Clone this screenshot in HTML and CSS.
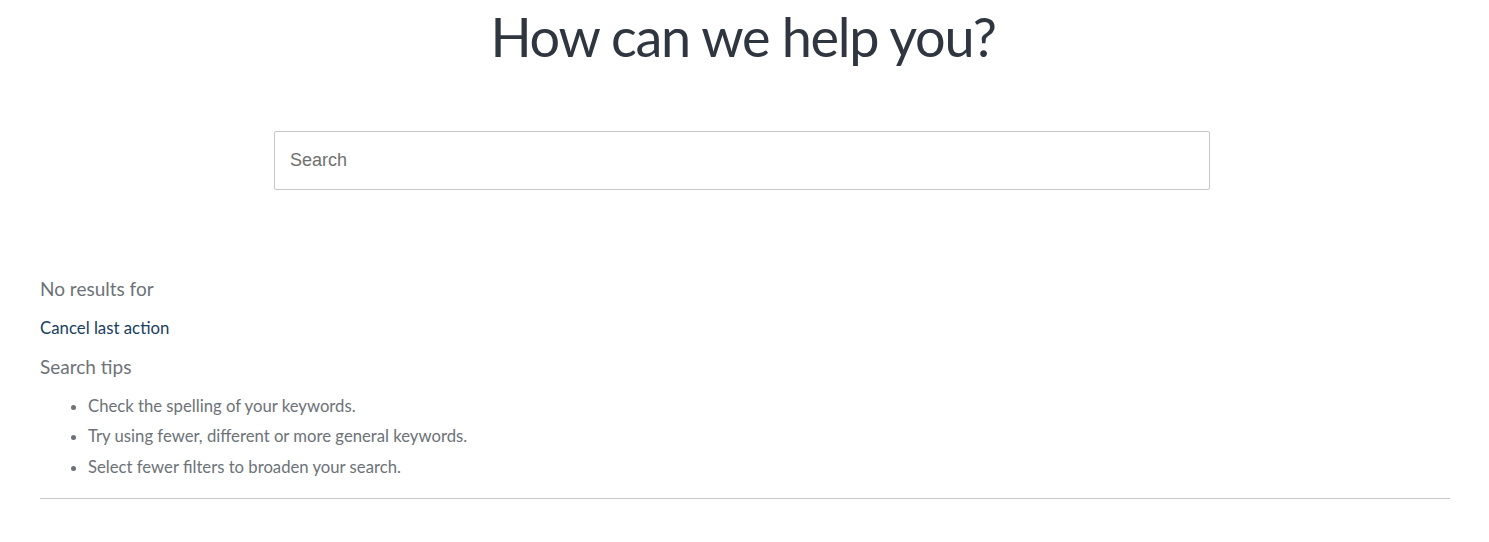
FILE: index.html
```html
<!DOCTYPE html>
<html lang="en">
<head>
<meta charset="utf-8">
<title>How can we help you?</title>
<link rel="stylesheet" href="styles.css">
</head>
<body>
<main class="page">
  <h1 class="title">How can we help you?</h1>
  <div class="search-wrap">
    <input class="search" type="text" placeholder="Search">
  </div>
  <section class="results">
    <p class="no-results">No results for</p>
    <a class="cancel" href="#">Cancel last action</a>
    <h2 class="tips-title">Search tips</h2>
    <ul class="tips">
      <li>Check the spelling of your keywords.</li>
      <li>Try using fewer, different or more general keywords.</li>
      <li>Select fewer filters to broaden your search.</li>
    </ul>
    <hr class="rule">
  </section>
</main>
</body>
</html>
```

FILE: styles.css
```css
* { box-sizing: border-box; }
html, body { margin: 0; padding: 0; background: #ffffff; }
body {
  font-family: Lato, "Open Sans", "Liberation Sans", sans-serif;
  color: #6d7278;
}
.page {
  padding: 5px 39px 0 40px;
}
.title {
  margin: 0;
  font-size: 54px;
  font-weight: 400;
  line-height: 1.2;
  letter-spacing: -1.3px;
  color: #2f3640;
  text-align: center;
  padding-right: 4px;
}
.search-wrap {
  display: flex;
  justify-content: center;
  margin-top: 61px;
  padding-right: 6px;
}
.search {
  width: 936px;
  height: 59px;
  border: 1px solid #c6c6c6;
  border-radius: 2px;
  padding: 0 15px;
  font-family: "Liberation Sans", Arial, sans-serif;
  font-size: 18px;
  color: #333;
  background: #fff;
  outline: none;
}
.search::placeholder { color: #707070; }
.results {
  display: flex;
  flex-direction: column;
  align-items: flex-start;
  margin-top: 88px;
}
.no-results {
  margin: 0;
  font-size: 19px;
  line-height: 1.2;
}
.cancel {
  margin-top: 17px;
  font-size: 16.8px;
  line-height: 1.2;
  color: #17405f;
  text-decoration: none;
}
.tips-title {
  margin: 18px 0 0;
  font-size: 19px;
  font-weight: 400;
  line-height: 1.2;
}
.tips {
  margin: 17px 0 0;
  padding-left: 48px;
  font-size: 16.7px;
  line-height: 1.2;
}
.tips li + li { margin-top: 10.8px; }
.tips li::marker { color: #6d7278; }
.rule {
  align-self: stretch;
  margin: 21px 0 0;
  border: 0;
  border-top: 1px solid #c8c8c8;
  height: 0;
}
```
